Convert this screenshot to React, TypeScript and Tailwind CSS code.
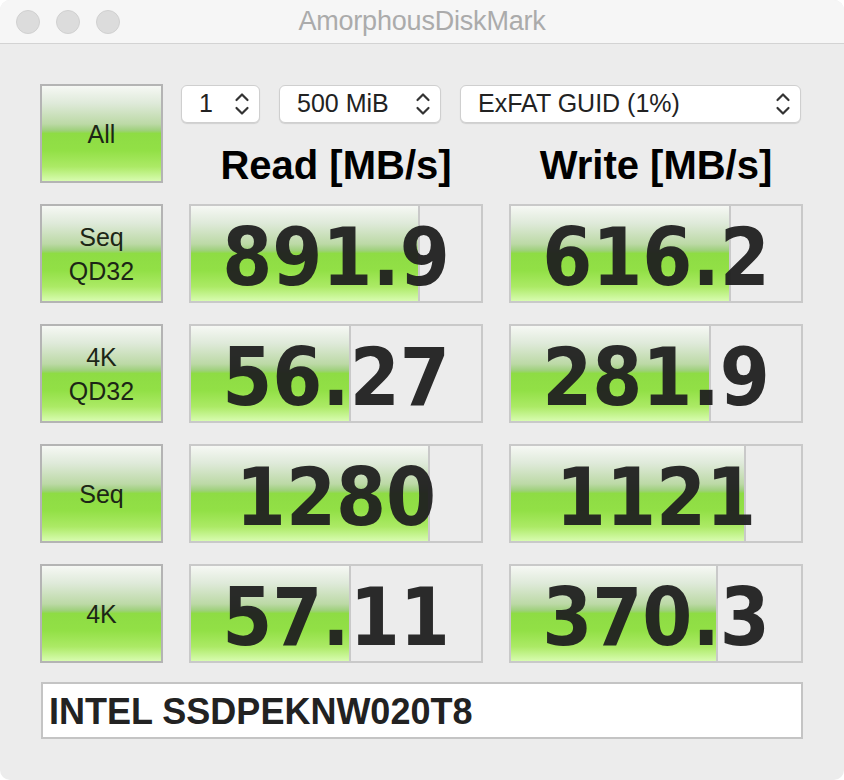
import React from "react";

type Result = {
    label: string[];
    read: string;
    readPct: number;
    write: string;
    writePct: number;
};

const results: Result[] = [
    {label: ["Seq", "QD32"], read: "891.9", readPct: 78.9, write: "616.2", writePct: 75.9},
    {label: ["4K", "QD32"], read: "56.27", readPct: 55.1, write: "281.9", writePct: 69.0},
    {label: ["Seq"], read: "1280", readPct: 82.3, write: "1121", writePct: 81.0},
    {label: ["4K"], read: "57.11", readPct: 55.1, write: "370.3", writePct: 71.4},
];

const green =
    "bg-[linear-gradient(to_bottom,#f6f8f4_0%,#dfeada_18%,#bcd9a6_40%,#9ed07a_47%,#8edc44_50%,#92e046_68%,#acea66_85%,#d8fcb0_100%)]";

function Chevrons() {
    return (
        <svg width="16" height="26" viewBox="0 0 16 26" fill="none" stroke="#333" strokeWidth="2.2"
             strokeLinecap="round" strokeLinejoin="round">
            <path d="M2.5 9 L8 3.5 L13.5 9"/>
            <path d="M2.5 17 L8 22.5 L13.5 17"/>
        </svg>
    );
}

function Select({text, width}: { text: string, width: string }) {
    return (
        <div className={`${width} h-[38px] bg-white rounded-[6px] border border-[#cfcfcf] shadow-[0_1px_1px_rgba(0,0,0,0.12)] flex items-center justify-between pl-[17px] pr-[9px] text-[25px] text-[#222]`}>
            <span>{text}</span>
            <Chevrons/>
        </div>
    );
}

function LabelButton({lines}: { lines: string[] }) {
    return (
        <div className={`h-[99px] border-2 border-[#b4b4b4] ${green} flex flex-col items-center justify-center text-[25px] leading-[34px] text-[#1c2616]`}>
            {lines.map((l) => <span key={l}>{l}</span>)}
        </div>
    );
}

function ResultBox({value, pct}: { value: string, pct: number }) {
    return (
        <div className="relative h-[99px] border-2 border-[#c9c9c9] bg-[#ececec]">
            <div className={`absolute left-0 top-0 bottom-0 ${green} border-r-2 border-[#c9c9c9]`}
                 style={{width: `${pct}%`}}/>
            <div className="relative h-full flex items-center justify-center pt-[8px] text-[80px] leading-[0.9] font-bold text-[#202020]/95 [font-family:'DejaVu_Sans_Condensed','DejaVu_Sans',sans-serif] [font-stretch:condensed]">
                {value}
            </div>
        </div>
    );
}

export default function App() {
    return (
        <div className="w-[844px] h-[780px] bg-white [font-family:'Liberation_Sans',Arial,sans-serif]">
            <div className="w-[844px] h-[780px] rounded-[10px] overflow-hidden bg-[#ececec] flex flex-col">
                <div className="h-[44px] shrink-0 bg-[#f6f6f6] border-b border-[#d3d3d3] flex items-center relative">
                    <div className="absolute left-[16px] top-[10px] flex gap-[16px]">
                        <div className="w-[24px] h-[24px] rounded-full bg-[#dcdcdc] border border-[#d0d0d0]"/>
                        <div className="w-[24px] h-[24px] rounded-full bg-[#dcdcdc] border border-[#d0d0d0]"/>
                        <div className="w-[24px] h-[24px] rounded-full bg-[#dcdcdc] border border-[#d0d0d0]"/>
                    </div>
                    <div className="w-full text-center text-[27px] text-[#ababab] tracking-[-0.2px]">AmorphousDiskMark</div>
                </div>

                <div className="pl-[40px] pt-[40px]">
                    <div className="grid grid-cols-[123px_294px_294px] gap-x-[26px] gap-y-[21px]">
                        <LabelButton lines={["All"]}/>
                        <div className="col-span-2 -ml-[8px] h-[99px] flex flex-col">
                            <div className="flex gap-[19px] mt-[1px]">
                                <Select text="1" width="w-[79px]"/>
                                <Select text="500 MiB" width="w-[162px]"/>
                                <Select text="ExFAT GUID (1%)" width="w-[341px]"/>
                            </div>
                            <div className="ml-[8px] mt-[22px] grid grid-cols-[294px_294px] gap-x-[26px] text-[40px] leading-none font-bold text-black text-center">
                                <span>Read [MB/s]</span>
                                <span>Write [MB/s]</span>
                            </div>
                        </div>

                        {results.map((r) => (
                            <React.Fragment key={r.label.join(" ")}>
                                <LabelButton lines={r.label}/>
                                <ResultBox value={r.read} pct={r.readPct}/>
                                <ResultBox value={r.write} pct={r.writePct}/>
                            </React.Fragment>
                        ))}
                    </div>

                    <div className="mt-[19px] ml-[1px] w-[762px] h-[57px] bg-white border-2 border-[#c4c4c4] flex items-center pl-[6px] pt-[2px] text-[36px] font-bold text-[#222]">
                        INTEL SSDPEKNW020T8
                    </div>
                </div>
            </div>
        </div>
    );
}
